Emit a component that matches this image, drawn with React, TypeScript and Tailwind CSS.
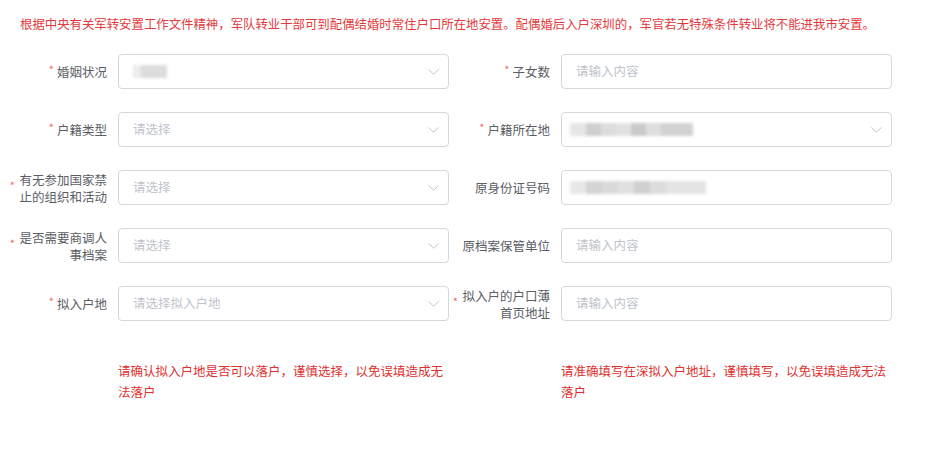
import React from 'react';

type Field = {
  label: string;
  required?: boolean;
  kind: 'select' | 'input';
  placeholder?: string;
  value?: React.ReactNode;
};

const FONT = { fontFamily: '"Noto Sans CJK SC", "Noto Sans", sans-serif' };

function Chevron() {
  return (
    <svg width="11" height="7" viewBox="0 0 11 7" className="absolute right-[9px] top-1/2 -translate-y-1/2">
      <path d="M0.5 0.8 L5.5 5.8 L10.5 0.8" fill="none" stroke="#c0c4cc" strokeWidth="1" />
    </svg>
  );
}

function Blur({ widths }: { widths: [number, string][] }) {
  return (
    <div className="flex items-center h-[13px] blur-[1.5px]">
      {widths.map(([w, c], i) => (
        <span key={i} className="h-[13px] block" style={{ width: w, background: c }} />
      ))}
    </div>
  );
}

function FormItem({ field }: { field: Field }) {
  return (
    <div className="flex items-center h-[35px]">
      <div className="w-[111px] h-full flex items-center justify-end pr-[11px] text-[#5a5d63] text-[12.5px] leading-[17px]">
        {field.required && <span className="text-[#f56c6c] mr-[3px] text-[11px] -mt-[4px]">*</span>}
        <span className="max-w-[89px] text-right">{field.label}</span>
      </div>
      <div className="relative w-[331px] h-full border border-[#d4d7de] rounded-[4px] bg-white flex items-center pl-[14px] text-[12.5px]">
        {field.value ? field.value : <span className="text-[#c0c4cc]">{field.placeholder}</span>}
        {field.kind === 'select' && <Chevron />}
      </div>
    </div>
  );
}

const ROWS: [Field, Field][] = [
  [
    {
      label: '婚姻状况',
      required: true,
      kind: 'select',
      value: <Blur widths={[[8, '#ececec'], [26, '#dcdcdc']]} />,
    },
    { label: '子女数', required: true, kind: 'input', placeholder: '请输入内容' },
  ],
  [
    { label: '户籍类型', required: true, kind: 'select', placeholder: '请选择' },
    {
      label: '户籍所在地',
      required: true,
      kind: 'select',
      value: (
        <div className="-ml-[6px]">
          <Blur widths={[[16, '#e6e6e6'], [15, '#cfcfcf'], [15, '#dcdcdc'], [15, '#e2e2e2'], [15, '#cbcbcb'], [15, '#dedede'], [32, '#d2d2d2']]} />
        </div>
      ),
    },
  ],
  [
    { label: '有无参加国家禁止的组织和活动', required: true, kind: 'select', placeholder: '请选择' },
    {
      label: '原身份证号码',
      kind: 'input',
      value: (
        <div className="-ml-[6px]">
          <Blur widths={[[16, '#e8e8e8'], [16, '#d4d4d4'], [16, '#dadada'], [16, '#e0e0e0'], [16, '#d0d0d0'], [16, '#dcdcdc'], [40, '#e4e4e4']]} />
        </div>
      ),
    },
  ],
  [
    { label: '是否需要商调人事档案', required: true, kind: 'select', placeholder: '请选择' },
    { label: '原档案保管单位', kind: 'input', placeholder: '请输入内容' },
  ],
  [
    { label: '拟入户地', required: true, kind: 'select', placeholder: '请选择拟入户地' },
    { label: '拟入户的户口薄首页地址', required: true, kind: 'input', placeholder: '请输入内容' },
  ],
];

export default function App() {
  return (
    <div className="w-[951px] h-[449px] bg-white overflow-hidden" style={FONT}>
      <p className="pt-[15px] pl-[20px] text-[12.4px] leading-[18px] text-[#e4393c] whitespace-nowrap">
        根据中央有关军转安置工作文件精神，军队转业干部可到配偶结婚时常住户口所在地安置。配偶婚后入户深圳的，军官若无特殊条件转业将不能进我市安置。
      </p>
      <div className="mt-[21px] pl-[7px] grid grid-cols-[442px_442px] gap-x-[1px] gap-y-[23px]">
        {ROWS.map(([l, r], i) => (
          <React.Fragment key={i}>
            <FormItem field={l} />
            <FormItem field={r} />
          </React.Fragment>
        ))}
      </div>
      <div className="mt-[39px] pl-[7px] grid grid-cols-[442px_442px] gap-x-[1px] text-[12.5px] leading-[21px] text-[#e0312f]">
        <div className="pl-[111px]">
          <p className="w-[331px]">请确认拟入户地是否可以落户，谨慎选择，以免误填造成无法落户</p>
        </div>
        <div className="pl-[111px]">
          <p className="w-[331px]">请准确填写在深拟入户地址，谨慎填写，以免误填造成无法落户</p>
        </div>
      </div>
    </div>
  );
}
